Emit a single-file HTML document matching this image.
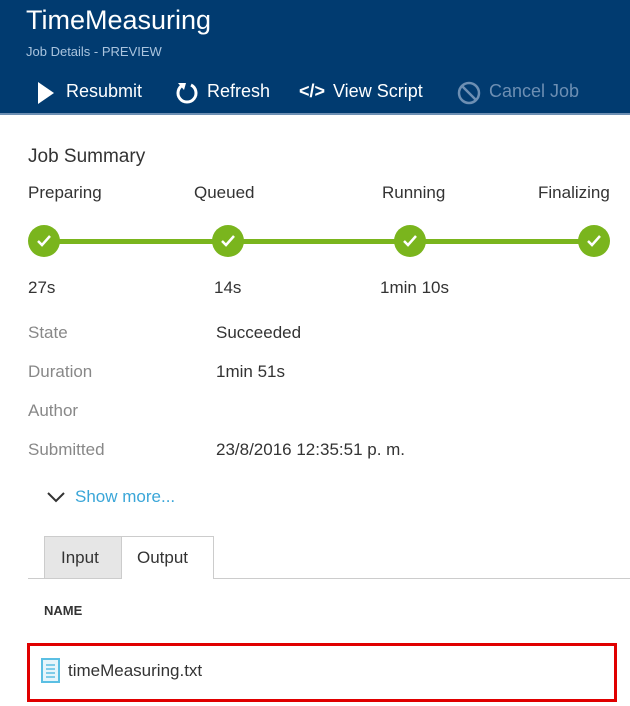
<!DOCTYPE html>
<html><head><style>
*{margin:0;padding:0;box-sizing:border-box}
body{width:630px;height:706px;background:#fff;font-family:"Liberation Sans",sans-serif;position:relative;overflow:hidden;color:#333}
.a{position:absolute;white-space:nowrap}
#hdr{position:absolute;left:0;top:0;width:630px;height:115px;background:#013b70;border-bottom:2px solid #6d8fb3}
.tb{color:#fff;font-size:18px;top:81px}
.lbl{color:#888;font-size:17px}
.val{color:#333;font-size:17px}
.c{position:absolute;width:32px;height:32px;border-radius:50%;background:#7ab51d;top:225px}
.c svg{position:absolute;left:8px;top:9px}
</style></head><body>
<div id="hdr"></div>
<div class="a" style="left:26px;top:5px;font-size:27px;color:#fff">TimeMeasuring</div>
<div class="a" style="left:26px;top:44px;font-size:13px;color:#aac4de">Job Details - PREVIEW</div>
<svg class="a" style="left:37px;top:81px" width="18" height="24"><path d="M1 1 L17 12 L1 23Z" fill="#fff"/></svg>
<div class="a tb" style="left:66px">Resubmit</div>
<svg class="a" style="left:175px;top:81px" width="24" height="24"><path d="M8 4 A9 9 0 1 0 16 4" fill="none" stroke="#fff" stroke-width="3"/><path d="M3 2 L11 2 L9 9Z" fill="#fff"/></svg>
<div class="a tb" style="left:207px">Refresh</div>
<div class="a tb" style="left:299px;font-weight:bold">&lt;/&gt;</div>
<div class="a tb" style="left:333px">View Script</div>
<svg class="a" style="left:457px;top:81px" width="24" height="24"><circle cx="12" cy="12" r="10" fill="none" stroke="#6d8fb3" stroke-width="2.5"/><path d="M5 5 L19 19" stroke="#6d8fb3" stroke-width="2.5"/></svg>
<div class="a tb" style="left:489px;color:#6d8fb3">Cancel Job</div>

<div class="a" style="left:28px;top:146px;font-size:19px;color:#333">Job Summary</div>
<div class="a val" style="left:28px;top:183px">Preparing</div>
<div class="a val" style="left:194px;top:183px">Queued</div>
<div class="a val" style="left:382px;top:183px">Running</div>
<div class="a val" style="left:538px;top:183px">Finalizing</div>
<div class="a" style="left:44px;top:239px;width:550px;height:5px;background:#7ab51d"></div>
<div class="c" style="left:28px"><svg width="16" height="14"><path d="M2 7 L6 11 L14 2" fill="none" stroke="#fff" stroke-width="2.5"/></svg></div>
<div class="c" style="left:212px"><svg width="16" height="14"><path d="M2 7 L6 11 L14 2" fill="none" stroke="#fff" stroke-width="2.5"/></svg></div>
<div class="c" style="left:394px"><svg width="16" height="14"><path d="M2 7 L6 11 L14 2" fill="none" stroke="#fff" stroke-width="2.5"/></svg></div>
<div class="c" style="left:578px"><svg width="16" height="14"><path d="M2 7 L6 11 L14 2" fill="none" stroke="#fff" stroke-width="2.5"/></svg></div>
<div class="a val" style="left:28px;top:278px">27s</div>
<div class="a val" style="left:214px;top:278px">14s</div>
<div class="a val" style="left:380px;top:278px">1min 10s</div>

<div class="a lbl" style="left:28px;top:323px">State</div>
<div class="a val" style="left:216px;top:323px">Succeeded</div>
<div class="a lbl" style="left:28px;top:362px">Duration</div>
<div class="a val" style="left:216px;top:362px">1min 51s</div>
<div class="a lbl" style="left:28px;top:401px">Author</div>
<div class="a lbl" style="left:28px;top:440px">Submitted</div>
<div class="a val" style="left:216px;top:440px">23/8/2016 12:35:51 p. m.</div>
<svg class="a" style="left:46px;top:490px" width="20" height="14"><path d="M2 3 L10 11 L18 3" fill="none" stroke="#333" stroke-width="2"/></svg>
<div class="a" style="left:75px;top:487px;font-size:17px;color:#3aa6d8">Show more...</div>

<div class="a" style="left:44px;top:536px;width:78px;height:43px;background:#e6e6e6;border:1px solid #ccc"></div>
<div class="a val" style="left:61px;top:548px">Input</div>
<div class="a" style="left:121px;top:536px;width:93px;height:43px;background:#fff;border:1px solid #ccc;border-bottom:none"></div>
<div class="a val" style="left:137px;top:548px">Output</div>
<div class="a" style="left:28px;top:578px;width:93px;height:1px;background:#ccc"></div>
<div class="a" style="left:213px;top:578px;width:417px;height:1px;background:#ccc"></div>
<div class="a" style="left:44px;top:603px;font-size:13px;font-weight:bold;color:#333">NAME</div>

<div class="a" style="left:27px;top:643px;width:590px;height:59px;border:3px solid #e00000"></div>
<svg class="a" style="left:41px;top:658px" width="20" height="26"><rect x="1" y="1" width="17" height="23" fill="#e6f5fb" stroke="#5bbfe3" stroke-width="2"/><path d="M5 7H14M5 11H14M5 15H14M5 19H14" stroke="#5bbfe3" stroke-width="1.5"/></svg>
<div class="a val" style="left:68px;top:661px">timeMeasuring.txt</div>
</body></html>
